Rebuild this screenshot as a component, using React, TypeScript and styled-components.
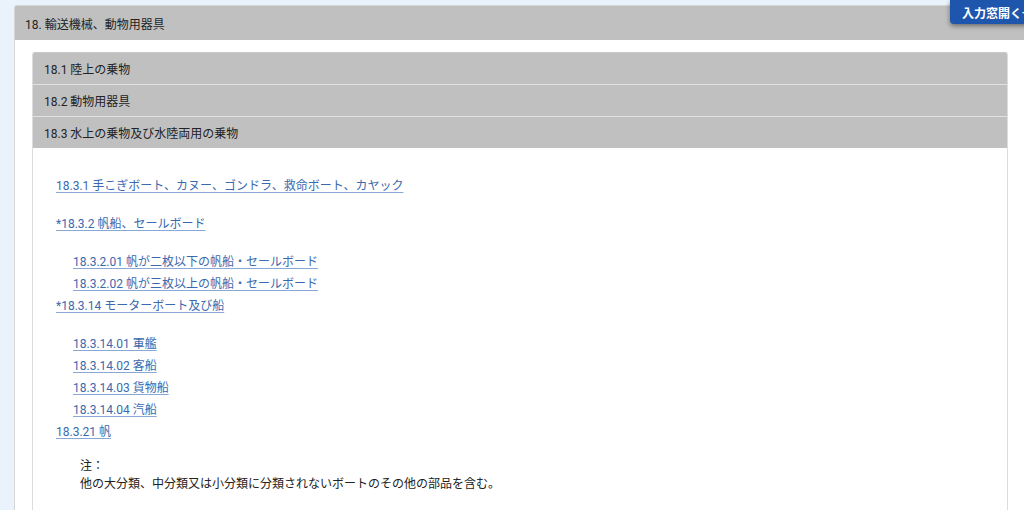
import React from 'react';
import styled, { createGlobalStyle } from 'styled-components';

const GlobalStyle = createGlobalStyle`
  html, body {
    margin: 0;
    padding: 0;
    background: #eaf3fc;
    overflow: hidden;
  }
  body {
    font-family: Roboto, 'Noto Sans CJK JP', sans-serif;
    font-size: 12px;
    color: #222;
  }
`;

const Page = styled.div`
  position: relative;
  width: 1024px;
  height: 510px;
  padding: 5px 0 0 14px;
  box-sizing: border-box;
`;

const OuterPanel = styled.section`
  width: 1012px;
  background: #fff;
  border: 1px solid #d6d6d6;
  border-radius: 3px 3px 0 0;
  box-sizing: border-box;
  min-height: 520px;
`;

const OuterHeader = styled.div`
  height: 34px;
  display: flex;
  align-items: center;
  padding-left: 10px;
  background: #c0c0c0;
  font-size: 12px;
  color: #222;
`;

const OuterBody = styled.div`
  padding: 12px 17px 0 17px;
`;

const InnerPanel = styled.div`
  border-radius: 3px 3px 0 0;
  overflow: hidden;
  border: 1px solid #dcdcdc;
  border-top: none;
  min-height: 470px;
`;

const InnerHeader = styled.div<{ $first?: boolean }>`
  height: 31px;
  display: flex;
  align-items: center;
  padding-left: 11px;
  background: #c0c0c0;
  border-top: 1px solid ${(p) => (p.$first ? '#c8c8c8' : '#e2e2e2')};
  font-size: 12px;
  color: #222;
`;

const Content = styled.div`
  padding: 27px 23px 20px;
  background: #fff;
`;

const LinkRow = styled.div<{ $sub?: boolean; $gap?: boolean }>`
  line-height: 22px;
  padding-left: ${(p) => (p.$sub ? '17px' : '0')};
  margin-bottom: ${(p) => (p.$gap ? '16px' : '0')};
`;

const Link = styled.a`
  color: #3a69ae;
  text-decoration: underline;
  text-decoration-color: #8aa8d6;
  text-underline-offset: 2px;
  font-size: 12px;
  cursor: pointer;
`;

const Note = styled.div`
  margin-top: 14px;
  padding-left: 24px;
  line-height: 18px;
  font-size: 12px;
  color: #222;
`;

const OpenButton = styled.button`
  position: absolute;
  top: 0;
  left: 950px;
  height: 24px;
  padding: 0 12px;
  border: none;
  border-radius: 0 0 0 4px;
  background: #1f56ad;
  color: #fff;
  font-family: Roboto, 'Noto Sans CJK JP', sans-serif;
  font-size: 12px;
  font-weight: 700;
  white-space: nowrap;
  box-shadow: 0 2px 5px rgba(0, 0, 0, 0.45);
`;

type Item = { label: string; sub?: boolean; gap?: boolean };

const items: Item[] = [
  { label: '18.3.1 手こぎボート、カヌー、ゴンドラ、救命ボート、カヤック', gap: true },
  { label: '*18.3.2 帆船、セールボード', gap: true },
  { label: '18.3.2.01 帆が二枚以下の帆船・セールボード', sub: true },
  { label: '18.3.2.02 帆が三枚以上の帆船・セールボード', sub: true },
  { label: '*18.3.14 モーターボート及び船', gap: true },
  { label: '18.3.14.01 軍艦', sub: true },
  { label: '18.3.14.02 客船', sub: true },
  { label: '18.3.14.03 貨物船', sub: true },
  { label: '18.3.14.04 汽船', sub: true },
  { label: '18.3.21 帆' },
];

const App = () => {
  return (
    <Page>
      <GlobalStyle />
      <OuterPanel>
        <OuterHeader>18. 輸送機械、動物用器具</OuterHeader>
        <OuterBody>
          <InnerPanel>
            <InnerHeader $first>18.1 陸上の乗物</InnerHeader>
            <InnerHeader>18.2 動物用器具</InnerHeader>
            <InnerHeader>18.3 水上の乗物及び水陸両用の乗物</InnerHeader>
            <Content>
              {items.map((it) => (
                <LinkRow key={it.label} $sub={it.sub} $gap={it.gap}>
                  <Link>{it.label}</Link>
                </LinkRow>
              ))}
              <Note>
                注：
                <br />
                他の大分類、中分類又は小分類に分類されないボートのその他の部品を含む。
              </Note>
            </Content>
          </InnerPanel>
        </OuterBody>
      </OuterPanel>
      <OpenButton>入力窓開く→</OpenButton>
    </Page>
  );
};

export default App;
